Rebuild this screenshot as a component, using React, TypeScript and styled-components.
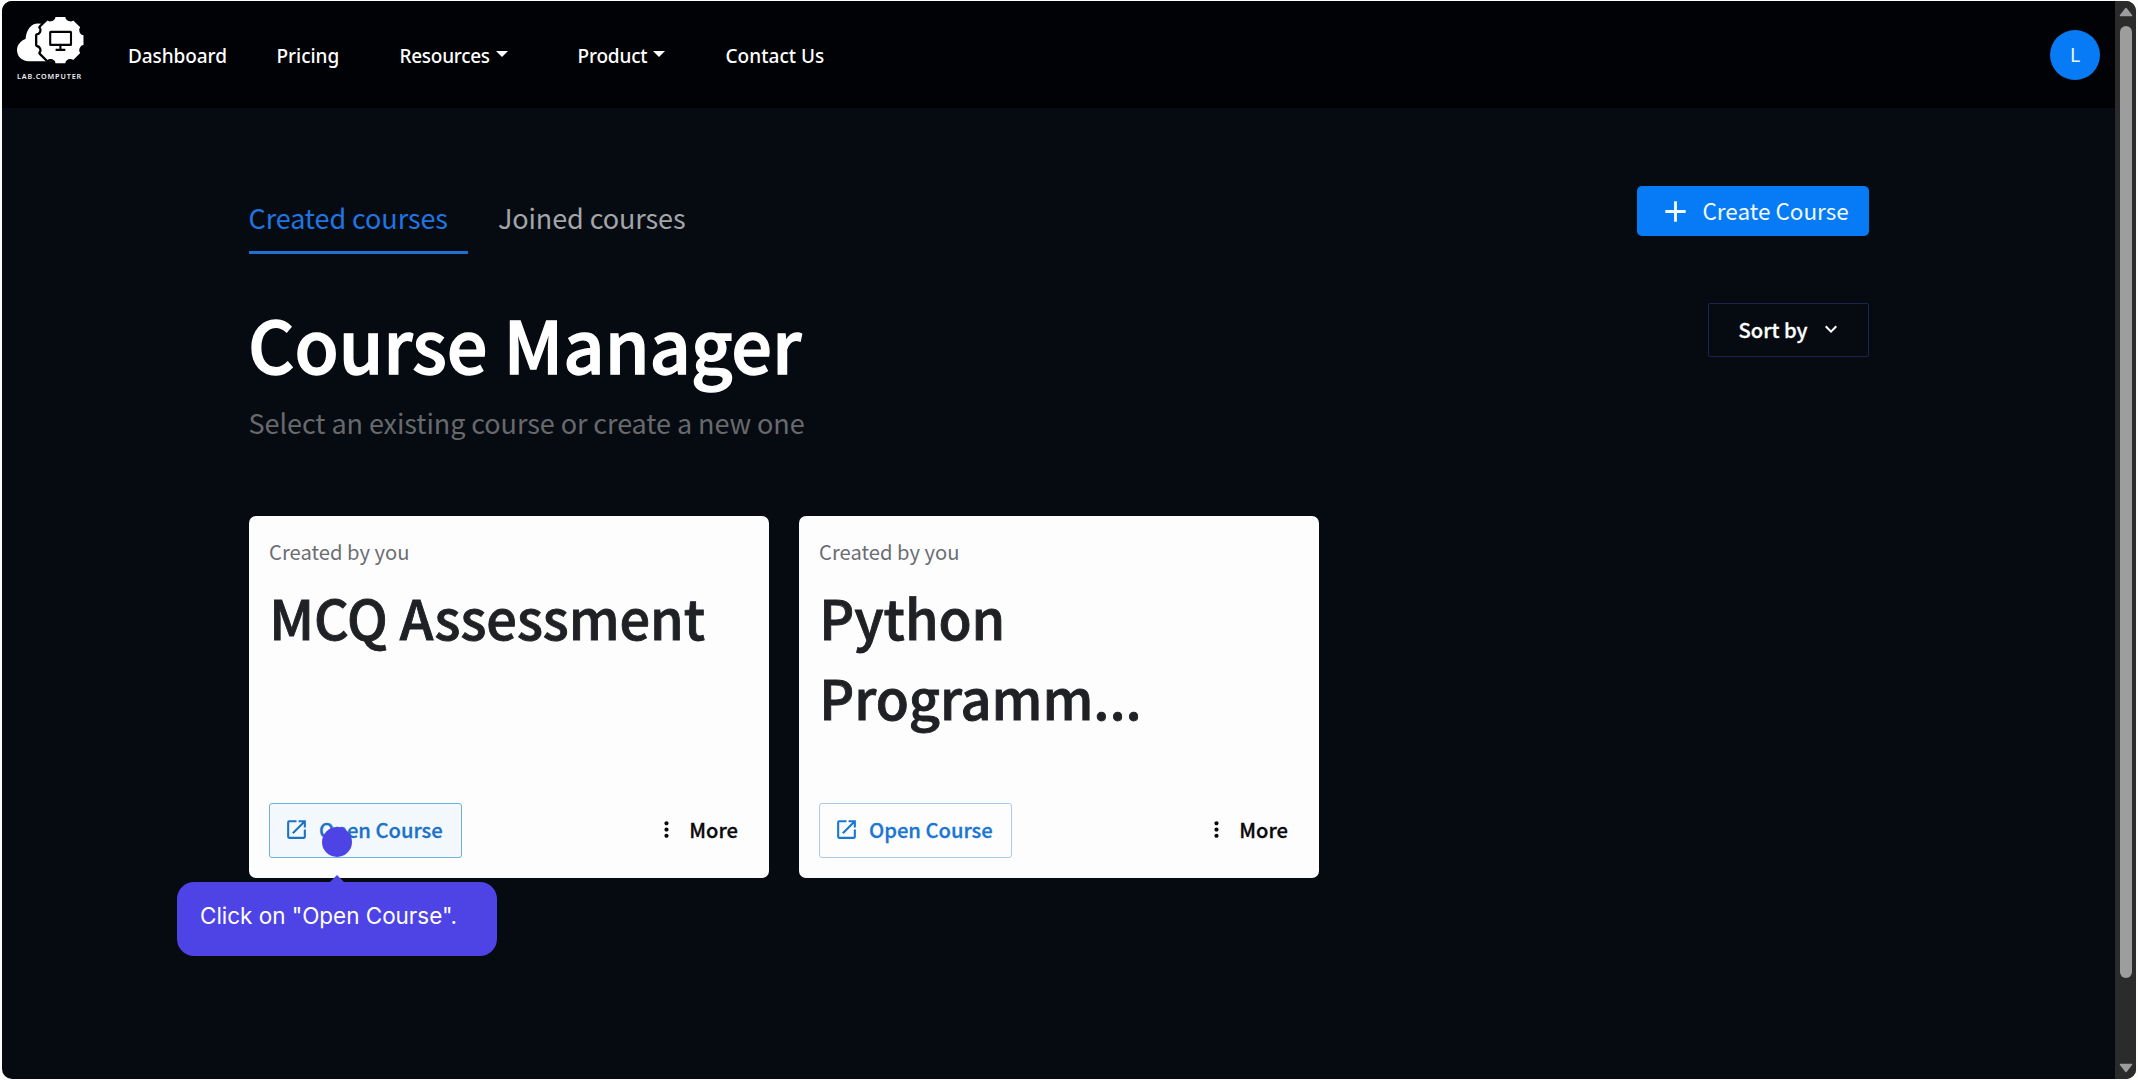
import React from 'react';
import styled, { createGlobalStyle, css } from 'styled-components';
import { MdAdd, MdExpandMore, MdMoreVert, MdOpenInNew } from 'react-icons/md';

const sans = '"Noto Sans CJK SC", "Noto Sans", sans-serif';
const uiSans = '"Noto Sans", "Open Sans", sans-serif';

const GlobalStyle = createGlobalStyle`
  * { box-sizing: border-box; }
  body { margin: 0; background: #fdfdfb; font-family: ${sans}; overflow: hidden; }
  button { font: inherit; background: none; border: 0; padding: 0; margin: 0; color: inherit; cursor: pointer; }
  h1, h2, p { margin: 0; }
  svg { display: block; flex: none; }
`;

const Frame = styled.div`
  height: 1080px;
  padding: 1px 2px;
`;

const Window = styled.div`
  position: relative;
  display: flex;
  height: 100%;
  border-radius: 10px;
  overflow: hidden;
  background: #060b12;
`;

const Page = styled.div`
  flex: 1;
  display: flex;
  flex-direction: column;
`;

const Header = styled.header`
  display: flex;
  align-items: center;
  height: 107px;
  padding: 0 15px;
  background: #010205;
`;

const Brand = styled.a`
  display: flex;
  flex-direction: column;
  width: 111px;
  height: 77px;
  color: #fff;
`;

const BrandName = styled.span`
  margin-top: 2px;
  font: 600 7.2px/12px ${uiSans};
  letter-spacing: 0.9px;
  color: #eceef4;
`;

const Nav = styled.nav`
  display: grid;
  grid-template-columns: 148.5px 123px 178px 148px auto;
  padding-top: 2px;
`;

const NavLink = styled.a<{ $tracking?: number }>`
  display: flex;
  align-items: center;
  gap: 6px;
  font: 500 19px/30px ${uiSans};
  letter-spacing: ${(p) => p.$tracking ?? 0}px;
  color: #fff;
`;

const Caret = styled.span`
  margin-top: -4px;
  border: 6px solid transparent;
  border-top-color: #fff;
  border-bottom: 0;
`;

const Avatar = styled.div`
  display: grid;
  place-items: center;
  width: 50px;
  height: 50px;
  margin-left: auto;
  border-radius: 50%;
  background: #067bf5;
  color: #eaf6ff;
  font: 400 19.5px/28px ${uiSans};
`;

const Main = styled.main`
  width: 1620px;
  margin: 0 auto;
  padding-top: 78px;
`;

const Row = styled.div`
  display: flex;
  justify-content: space-between;
  align-items: flex-start;
`;

const Tabs = styled.div`
  display: flex;
  gap: 30px;
`;

const Tab = styled.button<{ $active?: boolean }>`
  height: 68px;
  padding: 12px 20px 13px 0;
  border-bottom: 3px solid ${(p) => (p.$active ? '#1f70d4' : 'transparent')};
  color: ${(p) => (p.$active ? '#2075e2' : '#a3a5a9')};
  font-size: 27px;
  line-height: 40px;
  letter-spacing: -0.09px;
  text-align: left;
`;

const CreateButton = styled.button`
  display: flex;
  align-items: center;
  gap: 9.5px;
  width: 232px;
  height: 50px;
  padding-left: 21.5px;
  border-radius: 5px;
  background: #067bf5;
  color: #f0f9ff;
  font-size: 22.5px;
  line-height: 46px;
`;

const CreateLabel = styled.span`
  padding-bottom: 2px;
`;

const HeadingRow = styled(Row)`
  margin-top: 46px;
`;

const Title = styled.h1`
  margin-left: -0.5px;
  color: #fff;
  font-size: 72px;
  font-weight: 500;
  line-height: 86px;
  letter-spacing: -0.05px;
  -webkit-text-stroke: 1.3px currentColor;
`;

const Subtitle = styled.p`
  margin-top: 17px;
  color: #68696c;
  font-size: 27px;
  line-height: 40px;
  letter-spacing: -0.07px;
`;

const SortButton = styled.button`
  display: flex;
  align-items: center;
  gap: 11px;
  width: 161px;
  height: 54px;
  margin-top: 3px;
  padding: 0 0 2px 30px;
  border: 1px solid #1b2550;
  border-radius: 2px;
  color: #fff;
  font-size: 20.2px;
  font-weight: 500;
  -webkit-text-stroke: 0.3px currentColor;
`;

const Cards = styled.div`
  display: flex;
  gap: 30px;
  margin-top: 73px;
`;

const Card = styled.article`
  display: flex;
  flex-direction: column;
  width: 520px;
  height: 362px;
  padding: 20px;
  border-radius: 7px;
  background: #fdfdfe;
`;

const CardMeta = styled.p`
  padding-left: 0.6px;
  color: #6b6d73;
  font-size: 20.2px;
  line-height: 32px;
`;

const CardTitle = styled.h2`
  margin-top: 9px;
  padding-left: 0.8px;
  color: #1f2124;
  font-size: 54px;
  font-weight: 500;
  line-height: 80px;
  letter-spacing: -0.04px;
  -webkit-text-stroke: 0.9px currentColor;
`;

const CardActions = styled.div`
  display: flex;
  justify-content: space-between;
  margin-top: auto;
`;

const actionButton = css`
  display: flex;
  align-items: center;
  gap: 10.5px;
  height: 55px;
  padding-bottom: 2px;
  font-size: 20.2px;
  font-weight: 500;
  -webkit-text-stroke: 0.3px currentColor;
`;

const OpenButton = styled.button<{ $hovered?: boolean }>`
  ${actionButton}
  width: 193px;
  padding-left: 14px;
  border: 1px solid ${(p) => (p.$hovered ? '#6fb0dc' : '#aacbe6')};
  border-radius: 3px;
  background: ${(p) => (p.$hovered ? '#f3f8fd' : 'transparent')};
  color: ${(p) => (p.$hovered ? '#1c72c4' : '#1976d2')};
`;

const MoreButton = styled.button`
  ${actionButton}
  padding-right: 10.5px;
  color: #08090b;
`;

const Scrollbar = styled.div`
  display: flex;
  flex-direction: column;
  align-items: center;
  justify-content: space-between;
  width: 21px;
  padding: 6px 1px 6px 2px;
  background: #2b2b2c;
`;

const Thumb = styled.div`
  width: 12px;
  height: 952px;
  margin: 9px 0 auto;
  border-radius: 6px;
  background: #9d9d9e;
`;

const Guide = styled.div`
  position: absolute;
  left: 175px;
  top: 826px;
`;

const GuideDot = styled.span`
  display: block;
  width: 30px;
  height: 30px;
  margin-left: 145px;
  border-radius: 50%;
  background: #4e43e5;
`;

const GuideTip = styled.span`
  display: block;
  width: 0;
  margin: 18px 0 0 153px;
  border: 7px solid transparent;
  border-top: 0;
  border-bottom-color: #4e43e5;
`;

const GuideBubble = styled.div`
  width: 320px;
  height: 74px;
  padding: 17px 0 0 23px;
  border-radius: 17px;
  background: #4e43e5;
  color: #fff;
  font: 400 22.5px/33px Inter, sans-serif;
  letter-spacing: -0.03px;
`;

const gearPath = () => {
  const cx = 43.4;
  const cy = 24.2;
  const pts: string[] = [];
  for (let i = 0; i < 8; i++) {
    const at = (deg: number, r: number) => {
      const a = ((i * 45 + deg) * Math.PI) / 180;
      return `${(cx + r * Math.cos(a)).toFixed(2)} ${(cy + r * Math.sin(a)).toFixed(2)}`;
    };
    pts.push(`${i ? 'L' : 'M'}${at(-12, 23.6)} L${at(12, 23.6)} Q${at(14, 21.4)} ${at(18, 21.2)} Q${at(22.5, 20.4)} ${at(27, 21.2)} Q${at(31, 21.4)} ${at(33, 23.6)}`);
  }
  return pts.join(' ') + 'Z';
};

const Logo = () => (
  <svg width="72" height="52" viewBox="0 0 72 52" fill="currentColor">
    <path d="M11.500 45.200C5 45.200 0 40.500 0 34C0 29 3.500 25 8.500 23C9.500 13.500 14 7.500 21 7.500C30 7.500 34 13 36 19L38 45.200Z" />
    <path d={gearPath()} stroke="#010205" strokeWidth="4.600" strokeLinejoin="round" />
    <path d={gearPath()} />
    <g fill="none" stroke="#010205" strokeWidth="2.100" strokeLinejoin="round">
      <rect x="33.200" y="15.900" width="20.800" height="13" rx="0.500" />
      <path d="M43.400 29V33.500M38.600 33.900H48.300" />
    </g>
  </svg>
);

const Arrow = ({ down = false }: { down?: boolean }) => (
  <svg width="14" height="10" viewBox="0 0 14 10">
    <path
      d={down ? 'M1.500 1.500H12.500L7 8.500Z' : 'M1.500 8.500H12.500L7 1.500Z'}
      fill="#9d9d9e"
      stroke="#9d9d9e"
      strokeWidth="1.500"
      strokeLinejoin="round"
    />
  </svg>
);

const courses = [
  { title: 'MCQ Assessment', hovered: true },
  { title: 'Python Programm...', hovered: false },
];

export default function App() {
  return (
    <Frame>
      <GlobalStyle />
      <Window>
        <Page>
          <Header>
            <Brand>
              <Logo />
              <BrandName>LAB.COMPUTER</BrandName>
            </Brand>
            <Nav>
              <NavLink $tracking={-0.08}>Dashboard</NavLink>
              <NavLink $tracking={-0.02}>Pricing</NavLink>
              <NavLink $tracking={-0.28}>Resources<Caret /></NavLink>
              <NavLink $tracking={-0.18}>Product<Caret /></NavLink>
              <NavLink $tracking={0.03}>Contact Us</NavLink>
            </Nav>
            <Avatar>L</Avatar>
          </Header>
          <Main>
            <Row>
              <Tabs>
                <Tab $active>Created courses</Tab>
                <Tab>Joined courses</Tab>
              </Tabs>
              <CreateButton>
                <MdAdd size={35} />
                <CreateLabel>Create Course</CreateLabel>
              </CreateButton>
            </Row>
            <HeadingRow>
              <div>
                <Title>Course Manager</Title>
                <Subtitle>Select an existing course or create a new one</Subtitle>
              </div>
              <SortButton>
                Sort by
                <MdExpandMore size={24} />
              </SortButton>
            </HeadingRow>
            <Cards>
              {courses.map((course) => (
                <Card key={course.title}>
                  <CardMeta>Created by you</CardMeta>
                  <CardTitle>{course.title}</CardTitle>
                  <CardActions>
                    <OpenButton $hovered={course.hovered}>
                      <MdOpenInNew size={25} />
                      Open Course
                    </OpenButton>
                    <MoreButton>
                      <MdMoreVert size={25} />
                      More
                    </MoreButton>
                  </CardActions>
                </Card>
              ))}
            </Cards>
          </Main>
        </Page>
        <Scrollbar>
          <Arrow />
          <Thumb />
          <Arrow down />
        </Scrollbar>
        <Guide>
          <GuideDot />
          <GuideTip />
          <GuideBubble>Click on "Open Course".</GuideBubble>
        </Guide>
      </Window>
    </Frame>
  );
}
